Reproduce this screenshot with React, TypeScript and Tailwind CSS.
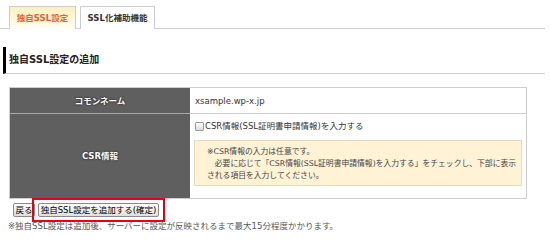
export default function App() {
  return (
    <div className="w-[550px] h-[241px] bg-white overflow-hidden text-[8.5px] leading-[12px] text-[#333] font-['DejaVu_Sans','Noto_Sans_CJK_JP',sans-serif]">
      <div className="w-[545px]">
        {/* tabs */}
        <div className="h-[29px] pt-[6px] pl-[9px] flex gap-[4px] border-b border-[#cccccc]">
          <div className="w-[67px] h-[23px] border border-b-0 border-[#cccccc] bg-gradient-to-b from-[#fff0bd] to-[#fffdf6] flex items-center justify-center font-bold text-[#e5641c]">
            独自SSL設定
          </div>
          <div className="w-[75px] h-[23px] border border-b-0 border-[#cccccc] bg-white flex items-center justify-center font-bold text-[#333]">
            SSL化補助機能
          </div>
        </div>

        {/* heading */}
        <div className="mt-[18px] ml-[3px] h-[27px] border-l-[3px] border-l-black border-b border-b-[#d0d0d0] pl-[3px] flex items-center text-[10px] font-bold text-[#222]">
          独自SSL設定の追加
        </div>

        {/* table */}
        <div className="mt-[13px] ml-[9px] w-[518px] border border-[#cccccc] grid grid-cols-[180px_1fr]">
          <div className="h-[26px] bg-[#5f5f5f] border-b border-[#a8a8a8] flex items-center justify-center font-bold text-white [text-shadow:0_0_2px_#000]">
            コモンネーム
          </div>
          <div className="h-[26px] border-b border-[#cccccc] pl-[5px] flex items-center text-[#333]">
            xsample.wp-x.jp
          </div>
          <div className="h-[84px] bg-[#5f5f5f] flex items-center justify-center font-bold text-white [text-shadow:0_0_2px_#000]">
            CSR情報
          </div>
          <div className="h-[84px] pt-[6px] pl-[4px] pr-[4px]">
            <div className="flex items-center h-[12px] pl-[1px]">
              <span className="inline-block w-[9px] h-[9px] border border-[#9a9a9a] rounded-[1px] bg-gradient-to-b from-[#ffffff] to-[#dcdcdc]" />
              <span className="ml-[1px]">CSR情報(SSL証明書申請情報)を入力する</span>
            </div>
            <div className="mt-[8px] h-[46px] border border-[#e6dab8] bg-[#fff2d5] pt-[5px] pl-[12px] text-[7.8px] leading-[12px] text-[#444] whitespace-nowrap">
              <div>※CSR情報の入力は任意です。</div>
              <div>　必要に応じて「CSR情報(SSL証明書申請情報)を入力する」をチェックし、下部に表示</div>
              <div>される項目を入力してください。</div>
            </div>
          </div>
        </div>

        {/* buttons */}
        <div className="mt-[4px] ml-[13px] flex gap-[3px] h-[14px]">
          <button className="h-[14px] w-[22px] border border-[#8a8a8a] rounded-[2px] bg-gradient-to-b from-[#fdfdfd] to-[#e0e0e0] text-black text-[8.5px] leading-[12px] flex items-center justify-center">
            戻る
          </button>
          <div className="relative">
            <button className="h-[14px] w-[121px] border border-[#8a8a8a] rounded-[2px] bg-gradient-to-b from-[#fdfdfd] to-[#e0e0e0] text-black text-[8.5px] leading-[12px] flex items-center justify-center whitespace-nowrap">
              独自SSL設定を追加する(確定)
            </button>
            <div className="absolute left-[-6px] top-[-5px] w-[133px] h-[24px] border-2 border-[#e60012] pointer-events-none" />
          </div>
        </div>

        {/* note */}
        <div className="mt-[3px] ml-[8px] text-[#555] whitespace-nowrap">
          ※独自SSL設定は追加後、サーバーに設定が反映されるまで最大15分程度かかります。
        </div>
      </div>
    </div>
  );
}
